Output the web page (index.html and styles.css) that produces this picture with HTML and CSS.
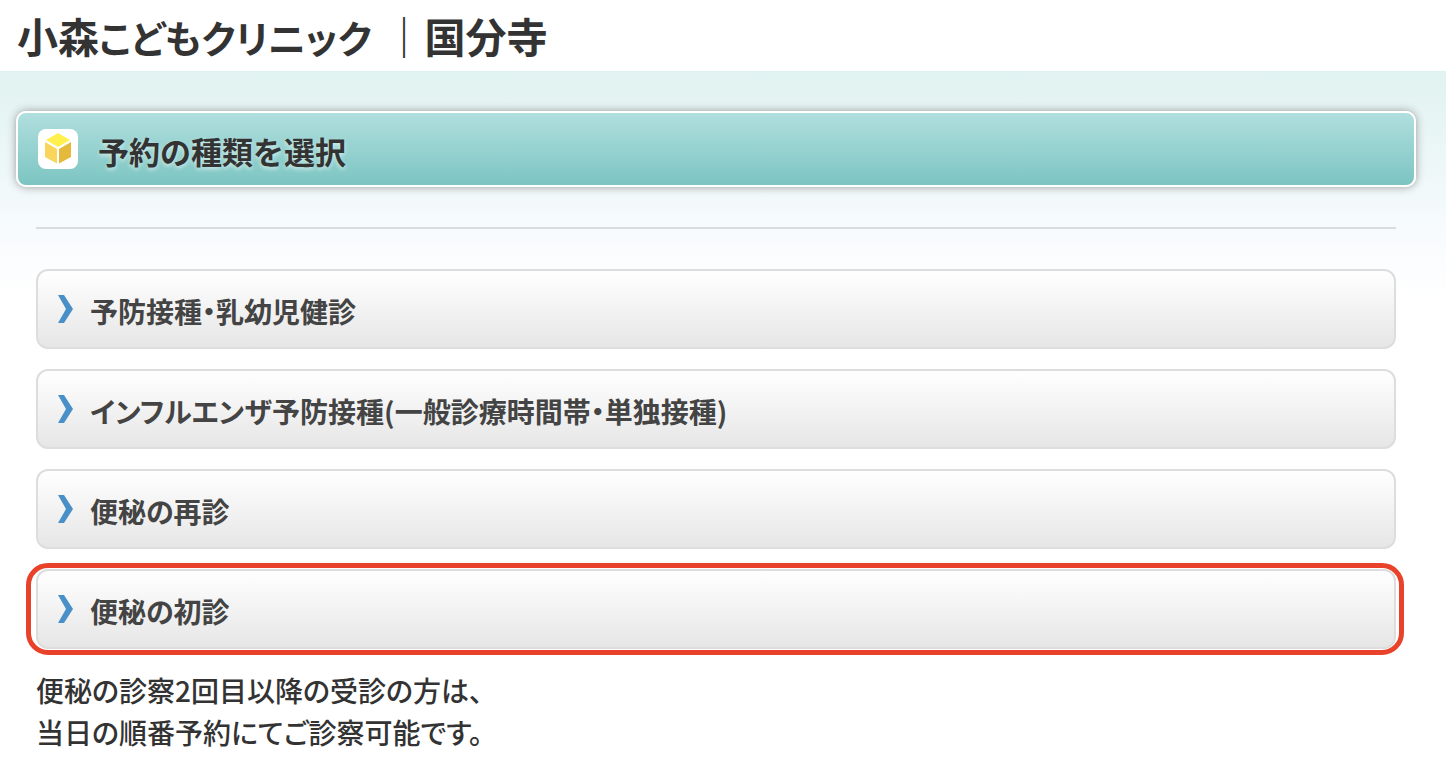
FILE: index.html
```html
<!DOCTYPE html>
<html lang="ja">
<head>
<meta charset="utf-8">
<meta name="viewport" content="width=device-width, initial-scale=1">
<title>小森こどもクリニック｜国分寺</title>
<link rel="stylesheet" href="styles.css">
</head>
<body>
<header class="site-header"><h1 class="site-title"><span>小森</span><span class="title-kana">こどもクリニック</span><span class="divider">｜</span><span>国分寺</span></h1></header>
<main class="page">
  <div class="heading">
    <svg class="heading-icon" viewBox="0 0 40 40" aria-hidden="true"><rect width="40" height="40" rx="8" fill="#fff"/><path d="M20 4 32 11 20 18 8 11Z" fill="#fff04d"/><path d="M7 13 19 20V34.500L7 28Z" fill="#fbd45c"/><path d="M33 13 21 20V34.500L33 28Z" fill="#e5b93c"/></svg>
    <h2 class="heading-text">予約の種類を選択</h2>
  </div>
  <div class="content">
    <hr class="rule">
    <nav class="menu">
      <a class="item" href="#"><svg class="arrow" viewBox="0 0 15 28" aria-hidden="true"><path d="M0 0H6L15 14 6 28H0L8 14Z"/></svg><span class="label">予防接種・乳幼児健診</span></a>
      <a class="item" href="#"><svg class="arrow" viewBox="0 0 15 28" aria-hidden="true"><path d="M0 0H6L15 14 6 28H0L8 14Z"/></svg><span class="label">インフルエンザ予防接種(一般診療時間帯・単独接種)</span></a>
      <a class="item" href="#"><svg class="arrow" viewBox="0 0 15 28" aria-hidden="true"><path d="M0 0H6L15 14 6 28H0L8 14Z"/></svg><span class="label">便秘の再診</span></a>
      <a class="item marked" href="#"><svg class="arrow" viewBox="0 0 15 28" aria-hidden="true"><path d="M0 0H6L15 14 6 28H0L8 14Z"/></svg><span class="label">便秘の初診</span></a>
    </nav>
    <p class="note">便秘の診察2回目以降の受診の方は、<br>当日の順番予約にてご診察可能です。</p>
  </div>
</main>
</body>
</html>
```
FILE: styles.css
```css
* { box-sizing: border-box; }
body { margin: 0; background: #fff; color: #333; font-family: "Noto Sans CJK JP", sans-serif; font-feature-settings: "palt"; }
.site-header { padding: 5px 17px 4px; }
.site-title { display: flex; align-items: baseline; margin: 0; font-size: 41px; line-height: 60px; font-weight: 700; }
.title-kana { font-size: 38px; }
.divider { margin-left: 12px; font-feature-settings: normal; }
.page { padding: 40px 30px 16px 16px; background: linear-gradient(#e0f2f1, #fafcfe 180px, #fff 230px); }
.heading { display: flex; align-items: center; gap: 20px; min-height: 76px; padding: 0 20px; border: 2px solid #fff; border-radius: 10px; background: linear-gradient(#b0dfde, #7cc5c2); box-shadow: 0 0 8px #999; }
.heading-icon { width: 40px; height: 40px; flex: none; }
.heading-text { margin: 0; padding-top: 4px; font-size: 31px; line-height: 44px; font-weight: 700; font-feature-settings: normal; text-shadow: 0 2px 4px #fff9; }
.content { padding: 40px 20px 0; }
.rule { height: 2px; margin: 0 0 40px; border: 0; background: #d9dcdd; }
.menu { display: grid; gap: 20px; }
.item { position: relative; display: flex; align-items: center; gap: 17px; min-height: 80px; padding: 0 20px; border: 2px solid #ddd; border-radius: 12px; background: linear-gradient(#fff, #e6e6e6); color: #444; font-size: 28px; line-height: 40px; font-weight: 700; text-decoration: none; }
.label { padding-top: 4px; }
.arrow { width: 15px; height: 28px; flex: none; fill: #4a90c8; }
.marked::after { content: ""; position: absolute; inset: -8px -10px -8px -12px; border: 5px solid #e8432a; border-radius: 22px; }
.note { margin: 20px 0 0; font-size: 28px; line-height: 42px; font-weight: 500; }
```
